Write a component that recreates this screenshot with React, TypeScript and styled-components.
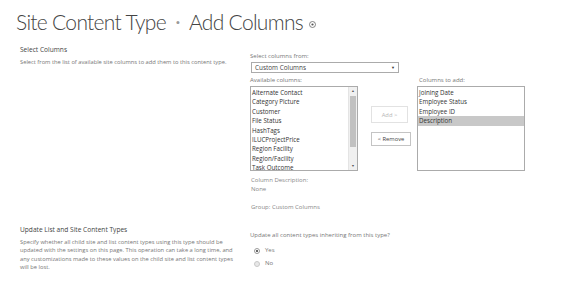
import React from "react";
import styled, { createGlobalStyle, css } from "styled-components";

const GlobalStyle = createGlobalStyle`
    html, body {
        margin: 0;
        padding: 0;
        background: #ffffff;
    }
    body {
        font-family: "Open Sans", "Liberation Sans", sans-serif;
        color: #444444;
    }
`;

const Page = styled.div`
    width: 586px;
    height: 297px;
    overflow: hidden;
    box-sizing: border-box;
    padding: 0 0 0 16px;
`;

const Title = styled.h1`
    margin: 0;
    padding-top: 2px;
    height: 40px;
    display: flex;
    align-items: center;
    gap: 6px;
    font-family: "Lato", "Open Sans", sans-serif;
    font-size: 21px;
    font-weight: 300;
    color: #444444;
    line-height: 30px;
    letter-spacing: -0.7px;
`;

const Crumb = styled.span`
    font-size: 10px;
    color: #999999;
    margin: 0 3px;
`;

const InfoIcon = styled.svg`
    width: 7px;
    height: 7px;
    margin-top: 5px;
`;

const Section = styled.section<{ top: number }>`
    display: grid;
    grid-template-columns: 230px 1fr;
    margin-top: ${p => p.top}px;
    padding-left: 4px;
`;

const Info = styled.div`
    display: flex;
    flex-direction: column;
    gap: 4px;
`;

const Heading = styled.h3`
    margin: 0;
    font-size: 6.6px;
    font-weight: 400;
    color: #444444;
    line-height: 9px;
`;

const Note = styled.p`
    margin: 0;
    font-size: 5.75px;
    color: #777777;
    line-height: 8.4px;
    width: 214px;
`;

const Controls = styled.div<{ top: number }>`
    display: flex;
    flex-direction: column;
    padding-top: ${p => p.top}px;
`;

const Label = styled.div<{ dim?: boolean }>`
    font-size: 6px;
    line-height: 9px;
    color: ${p => (p.dim ? "#888888" : "#777777")};
`;

const SelectBox = styled.div`
    width: 148px;
    height: 11px;
    box-sizing: border-box;
    border: 1px solid #ababab;
    display: flex;
    align-items: center;
    justify-content: space-between;
    padding: 0 3px;
    font-size: 6.4px;
    color: #444444;
    margin: 1px 0 3px 1px;
`;

const Arrow = styled.span`
    font-size: 4px;
    color: #333333;
`;

const Pickers = styled.div`
    display: grid;
    grid-template-columns: 108px 61px 108px;
    align-items: start;
`;

const Column = styled.div`
    display: flex;
    flex-direction: column;
`;

const ListBox = styled.div<{ wide?: boolean }>`
    width: 108px;
    height: 85px;
    box-sizing: border-box;
    border: 1px solid #ababab;
    display: flex;
    overflow: hidden;
    margin-top: 1px;
    ${p => p.wide && css`
        margin-left: -2px;
    `}
`;

const Items = styled.div`
    flex: 1;
    display: flex;
    flex-direction: column;
    padding-top: 1px;
`;

const Item = styled.div<{ selected?: boolean }>`
    height: 9.4px;
    line-height: 9.4px;
    padding-left: 1px;
    font-size: 6.2px;
    color: #333333;
    white-space: nowrap;
    background: ${p => (p.selected ? "#c8c8c8" : "transparent")};
`;

const ScrollBar = styled.div`
    width: 8px;
    display: flex;
    flex-direction: column;
    align-items: center;
    background: #f0f0f0;
    border-left: 1px solid #e4e4e4;
`;

const ScrollArrow = styled.div`
    height: 8px;
    font-size: 3.5px;
    line-height: 8px;
    color: #555555;
`;

const Thumb = styled.div`
    width: 6px;
    height: 51px;
    background: #c1c1c1;
    margin-top: 1px;
`;

const ScrollTrack = styled.div`
    flex: 1;
    display: flex;
    flex-direction: column;
    align-items: center;
`;

const Buttons = styled.div`
    display: flex;
    flex-direction: column;
    gap: 9px;
    padding: 30px 0 0 13px;
`;

const Button = styled.div<{ disabled?: boolean; w: number; h: number }>`
    width: ${p => p.w}px;
    height: ${p => p.h}px;
    box-sizing: border-box;
    border: 1px solid ${p => (p.disabled ? "#e2e2e2" : "#c4c4c4")};
    display: flex;
    align-items: center;
    justify-content: center;
    font-size: 5.8px;
    color: ${p => (p.disabled ? "#b5b5b5" : "#444444")};
    background: #ffffff;
`;

const Details = styled.div`
    display: flex;
    flex-direction: column;
    margin-top: 5px;
    padding-left: 1px;
`;

const Gap = styled.div`
    height: 9px;
`;

const Radios = styled.div`
    display: flex;
    flex-direction: column;
    gap: 4px;
    margin-top: 6px;
    padding-left: 4px;
`;

const RadioRow = styled.label`
    display: flex;
    align-items: center;
    gap: 5px;
    font-size: 6px;
    color: #777777;
    line-height: 9px;
`;

const Radio = styled.span<{ checked?: boolean }>`
    width: 6px;
    height: 6px;
    box-sizing: border-box;
    border-radius: 50%;
    border: 1px solid ${p => (p.checked ? "#9a9a9a" : "#c8c8c8")};
    background: ${p => (p.checked ? "#ffffff" : "#e8e8e8")};
    display: flex;
    align-items: center;
    justify-content: center;
    &::after {
        content: "";
        width: 2px;
        height: 2px;
        border-radius: 50%;
        background: ${p => (p.checked ? "#333333" : "transparent")};
    }
`;

const available = [
    "Alternate Contact",
    "Category Picture",
    "Customer",
    "File Status",
    "HashTags",
    "ILUCProjectPrice",
    "Region Facility",
    "Region/Facility",
    "Task Outcome",
];

const toAdd = ["Joining Date", "Employee Status", "Employee ID", "Description"];

export default function App() {
    return (
        <Page>
            <GlobalStyle />
            <Title>
                Site Content Type <Crumb>•</Crumb> Add Columns
                <InfoIcon viewBox="0 0 10 10">
                    <circle cx="5" cy="5" r="4.3" fill="none" stroke="#555" strokeWidth="1" />
                    <circle cx="5" cy="5" r="1.6" fill="#555" />
                </InfoIcon>
            </Title>

            <Section top={3}>
                <Info>
                    <Heading>Select Columns</Heading>
                    <Note>Select from the list of available site columns to add them to this content type.</Note>
                </Info>
                <Controls top={7}>
                    <Label>Select columns from:</Label>
                    <SelectBox>
                        Custom Columns
                        <Arrow>▼</Arrow>
                    </SelectBox>
                    <Pickers>
                        <Column>
                            <Label>Available columns:</Label>
                            <ListBox>
                                <Items>
                                    {available.map(name => (
                                        <Item key={name}>{name}</Item>
                                    ))}
                                </Items>
                                <ScrollBar>
                                    <ScrollArrow>▲</ScrollArrow>
                                    <ScrollTrack>
                                        <Thumb />
                                    </ScrollTrack>
                                    <ScrollArrow>▼</ScrollArrow>
                                </ScrollBar>
                            </ListBox>
                            <Details>
                                <Label dim>Column Description:</Label>
                                <Label dim>None</Label>
                                <Gap />
                                <Label dim>Group: Custom Columns</Label>
                            </Details>
                        </Column>
                        <Buttons>
                            <Button disabled w={37} h={17}>Add &gt;</Button>
                            <Button w={40} h={14}>&lt; Remove</Button>
                        </Buttons>
                        <Column>
                            <Label>Columns to add:</Label>
                            <ListBox wide>
                                <Items>
                                    {toAdd.map((name, i) => (
                                        <Item key={name} selected={i === toAdd.length - 1}>{name}</Item>
                                    ))}
                                </Items>
                            </ListBox>
                        </Column>
                    </Pickers>
                </Controls>
            </Section>

            <Section top={13}>
                <Info>
                    <Heading>Update List and Site Content Types</Heading>
                    <Note>
                        Specify whether all child site and list content types using this type should be
                        updated with the settings on this page. This operation can take a long time, and
                        any customizations made to these values on the child site and list content types
                        will be lost.
                    </Note>
                </Info>
                <Controls top={6}>
                    <Label>Update all content types inheriting from this type?</Label>
                    <Radios>
                        <RadioRow><Radio checked />Yes</RadioRow>
                        <RadioRow><Radio />No</RadioRow>
                    </Radios>
                </Controls>
            </Section>
        </Page>
    );
}
